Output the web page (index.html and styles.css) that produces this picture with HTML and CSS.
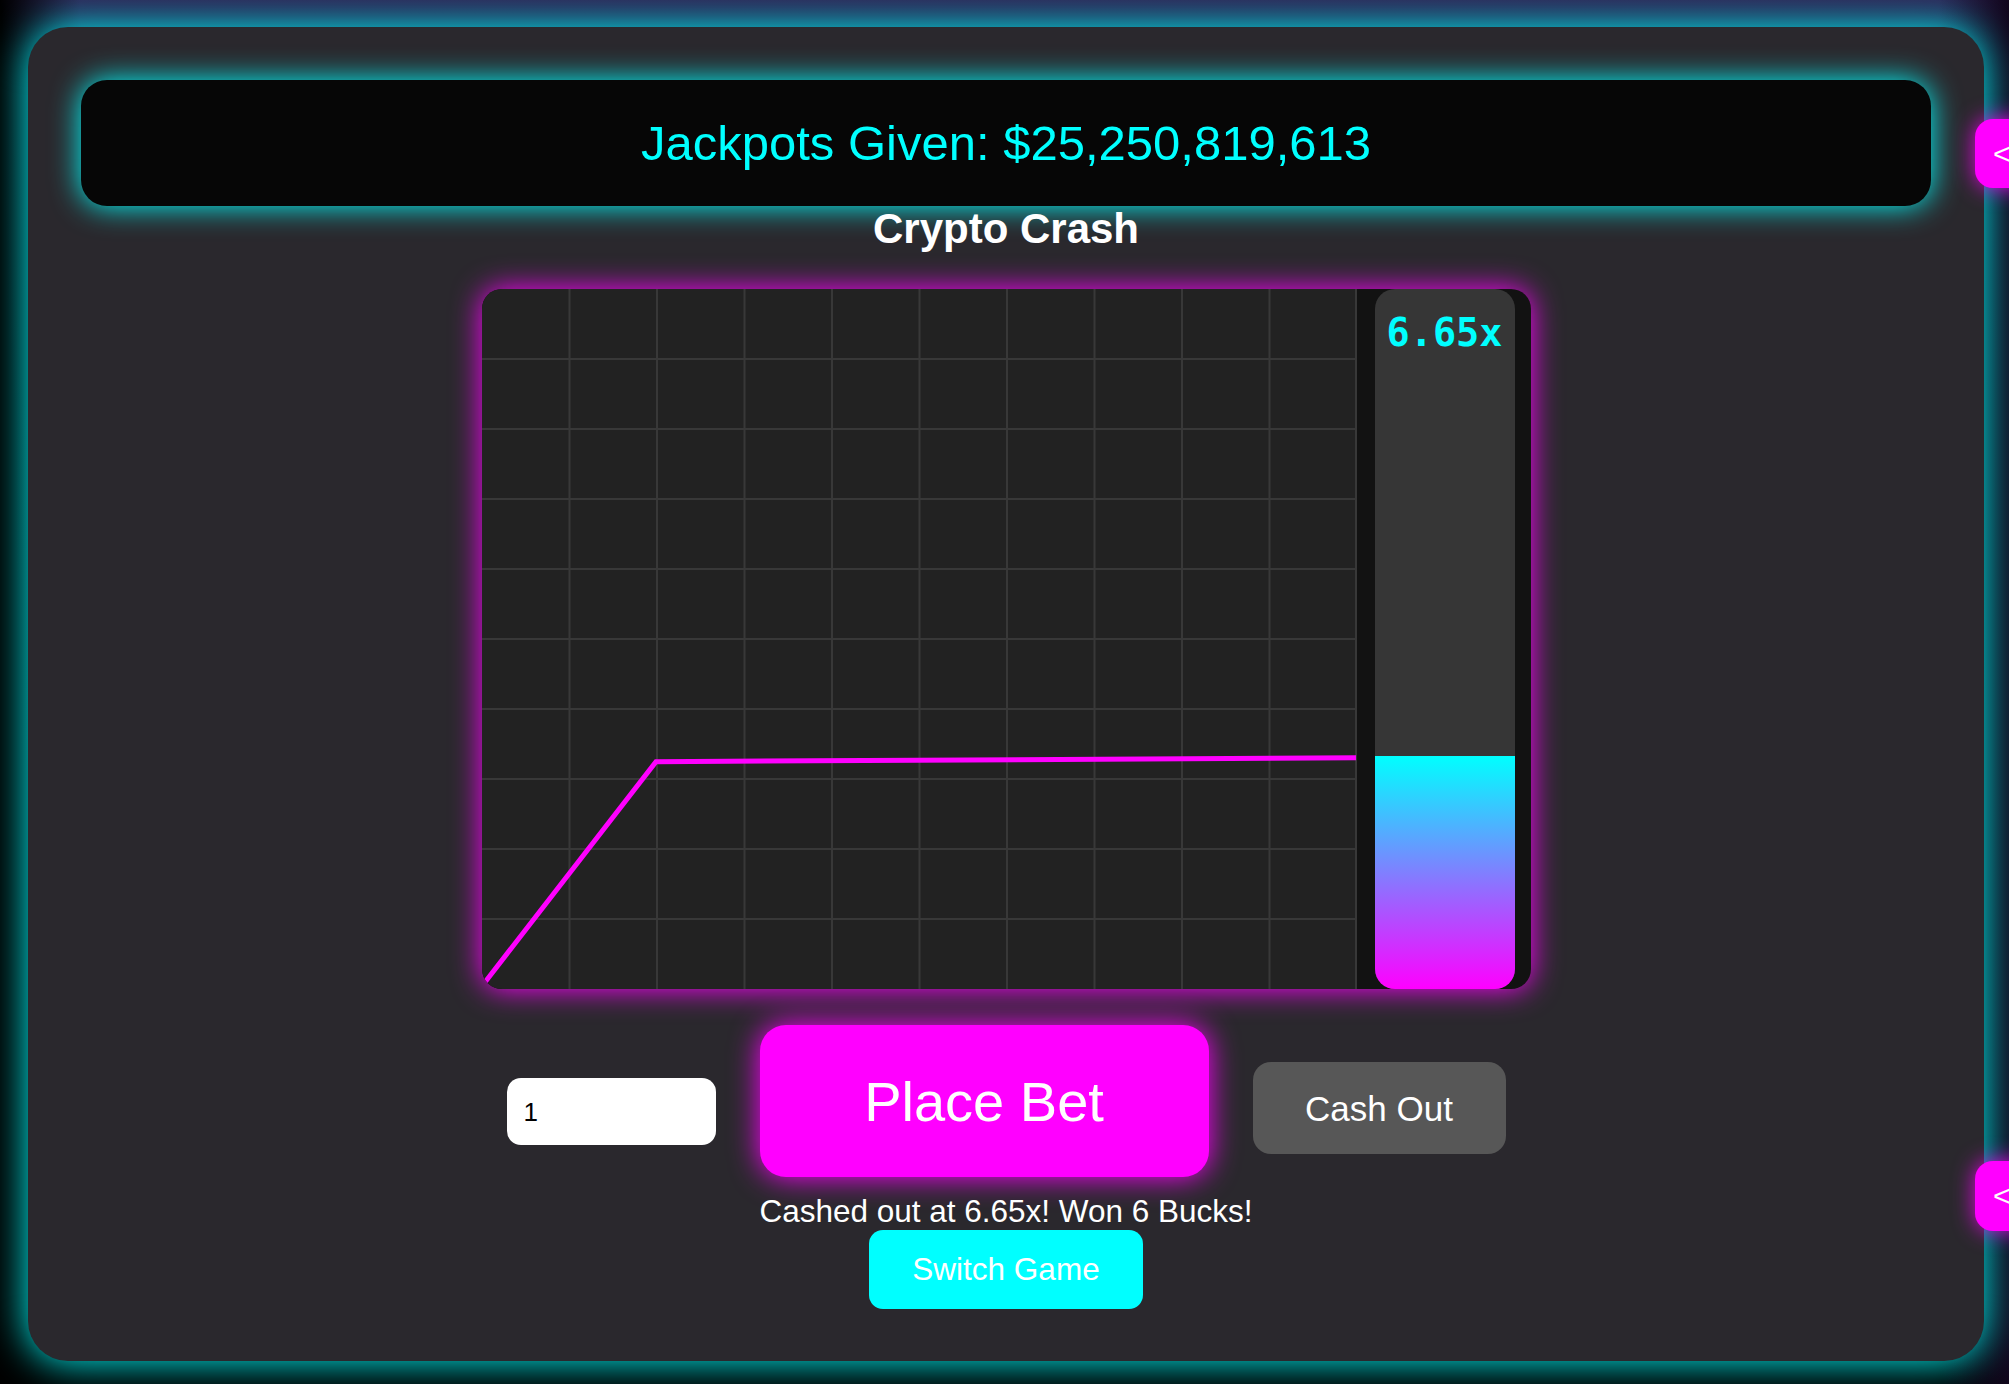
FILE: index.html
```html
<!DOCTYPE html>
<html lang="en">
<head>
<meta charset="utf-8">
<title>Crypto Crash</title>
<link rel="stylesheet" href="styles.css">
</head>
<body>
  <main class="panel">
    <div class="jackpot">Jackpots Given: $25,250,819,613</div>
    <h2 class="title">Crypto Crash</h2>
    <div class="chart">
      <svg class="plot" width="875" height="700" viewBox="0 0 875 700">
        <g class="grid">
          <line x1="87.5" y1="0" x2="87.5" y2="700"/>
          <line x1="175" y1="0" x2="175" y2="700"/>
          <line x1="262.5" y1="0" x2="262.5" y2="700"/>
          <line x1="350" y1="0" x2="350" y2="700"/>
          <line x1="437.5" y1="0" x2="437.5" y2="700"/>
          <line x1="525" y1="0" x2="525" y2="700"/>
          <line x1="612.5" y1="0" x2="612.5" y2="700"/>
          <line x1="700" y1="0" x2="700" y2="700"/>
          <line x1="787.5" y1="0" x2="787.5" y2="700"/>
          <line x1="874" y1="0" x2="874" y2="700"/>
          <line x1="0" y1="70" x2="875" y2="70"/>
          <line x1="0" y1="140" x2="875" y2="140"/>
          <line x1="0" y1="210" x2="875" y2="210"/>
          <line x1="0" y1="280" x2="875" y2="280"/>
          <line x1="0" y1="350" x2="875" y2="350"/>
          <line x1="0" y1="420" x2="875" y2="420"/>
          <line x1="0" y1="490" x2="875" y2="490"/>
          <line x1="0" y1="560" x2="875" y2="560"/>
          <line x1="0" y1="630" x2="875" y2="630"/>
        </g>
        <polyline class="curve" points="0,697 174,472.7 874,468.7"/>
      </svg>
      <div class="meter">
        <div class="meter-bar">
          <div class="meter-fill" style="height:33.3%"></div>
          <div class="meter-label">6.65x</div>
        </div>
      </div>
    </div>
    <div class="controls">
      <input class="bet-input" type="text" value="1">
      <button class="btn btn-place">Place Bet</button>
      <button class="btn btn-cash">Cash Out</button>
    </div>
    <p class="status">Cashed out at 6.65x! Won 6 Bucks!</p>
    <button class="btn btn-switch">Switch Game</button>
  </main>
  <button class="side-tab side-tab-top">&lt;</button>
  <button class="side-tab side-tab-bottom">&lt;</button>
</body>
</html>
```

FILE: styles.css
```css
html, body {
  margin: 0;
  padding: 0;
}

body {
  min-height: 100vh;
  overflow: hidden;
  font-family: "Liberation Sans", Arial, sans-serif;
  background:
    linear-gradient(to right, #000 0, rgba(0,0,0,0) 80px, rgba(0,0,0,0) calc(100% - 70px), #12061c 100%),
    linear-gradient(to bottom, #2e2254 0, #17112c 70px, #06050c 400px, #000 100%);
}

.panel {
  box-sizing: border-box;
  margin: 27px 25px 23px 28px;
  height: 1334px;
  padding: 53px 53px 52px;
  background: #2a282d;
  border-radius: 40px;
  box-shadow: 0 0 40px #00ffff;
  display: flex;
  flex-direction: column;
  align-items: center;
}

.panel > * {
  flex-shrink: 0;
}

.jackpot {
  align-self: stretch;
  background: #060606;
  color: #00ffff;
  font-size: 49px;
  line-height: 56px;
  padding: 35px 0;
  text-align: center;
  border-radius: 26px;
  box-shadow: 0 0 30px #00ffff;
}

.title {
  margin: 0 0 37px;
  font-size: 42px;
  line-height: 46px;
  font-weight: bold;
  color: #fff;
}

.chart {
  display: flex;
  height: 700px;
  border-radius: 20px;
  overflow: hidden;
  background: #121212;
  box-shadow: 0 0 30px #ff00ff;
}

.plot {
  display: block;
  flex-shrink: 0;
  background: #222222;
}

.grid line {
  stroke: #383838;
  stroke-width: 2;
}

.curve {
  fill: none;
  stroke: #ff00ff;
  stroke-width: 5;
}

.meter {
  box-sizing: border-box;
  width: 174px;
  padding: 0 16px 0 18px;
}

.meter-bar {
  position: relative;
  height: 700px;
  background: #363636;
  border-radius: 20px;
  overflow: hidden;
}

.meter-fill {
  position: absolute;
  left: 0;
  right: 0;
  bottom: 0;
  background: linear-gradient(to bottom, #00ffff, #ff00ff);
}

.meter-label {
  position: relative;
  padding-top: 21px;
  font-family: "DejaVu Sans Mono", monospace;
  font-weight: bold;
  font-size: 38.5px;
  line-height: 46px;
  color: #00ffff;
  text-align: center;
}

.controls {
  margin-top: 36px;
  display: flex;
  align-items: baseline;
  gap: 44px;
}

.bet-input {
  box-sizing: border-box;
  width: 209px;
  height: 67px;
  padding: 3px 17px 0;
  border: none;
  border-radius: 14px;
  background: #fff;
  color: #000;
  font-family: "Liberation Sans", Arial, sans-serif;
  font-size: 26px;
  outline: none;
}

.btn {
  border: none;
  margin: 0;
  font-family: "Liberation Sans", Arial, sans-serif;
  color: #fff;
  cursor: pointer;
}

.btn-place {
  width: 449px;
  padding: 45px 0 44px;
  font-size: 56px;
  line-height: 63px;
  background: #ff00ff;
  border-radius: 26px;
  box-shadow: 0 0 30px #ff00ff;
}

.btn-cash {
  width: 253px;
  padding: 27px 0 25px;
  font-size: 35px;
  line-height: 40px;
  background: #575757;
  border-radius: 18px;
}

.status {
  margin: 16px 0 0;
  font-size: 31.5px;
  line-height: 37px;
  color: #fff;
}

.btn-switch {
  display: block;
  padding: 21px 43px 21px;
  font-size: 31.5px;
  line-height: 37px;
  background: #00ffff;
  border-radius: 14px;
}

.side-tab {
  position: fixed;
  right: -46px;
  width: 80px;
  border: none;
  padding: 0 0 0 18px;
  text-align: left;
  background: #ff00ff;
  color: #fff;
  font-family: "Liberation Sans", Arial, sans-serif;
  font-size: 30px;
  border-radius: 18px;
  box-shadow: 0 0 22px rgba(255, 0, 255, 0.85);
}

.side-tab-top {
  top: 119px;
  height: 69px;
}

.side-tab-bottom {
  top: 1161px;
  height: 70px;
}
```
